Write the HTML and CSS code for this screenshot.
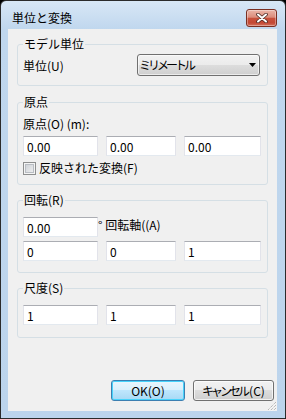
FILE: index.html
```html
<!DOCTYPE html>
<html lang="ja">
<head>
  <meta charset="UTF-8">
  <meta name="viewport" content="width=device-width, initial-scale=1.0">
  <title>単位と変換</title>
  <link rel="stylesheet" href="styles.css">
</head>
<body>
  <div class="window">
    <div class="titlebar">
      <span class="title">単位と変換</span>
      <button class="close-btn" type="button">
        <svg width="12" height="10" viewBox="0 0 12 10">
          <path d="M2 1.5 L10 8.5 M10 1.5 L2 8.5" stroke="#4a2a24" stroke-width="3.6" stroke-linecap="round"/>
          <path d="M2 1.5 L10 8.5 M10 1.5 L2 8.5" stroke="#ffffff" stroke-width="2" stroke-linecap="round"/>
        </svg>
      </button>
    </div>

    <div class="content">
      <fieldset class="group group-units">
        <legend>モデル単位</legend>
        <div class="unit-row">
          <label>単位(U)</label>
          <div class="combo">
            <span class="combo-text">ミリメートル</span>
            <svg class="combo-arrow" width="7" height="4" viewBox="0 0 7 4">
              <polygon points="0,0 7,0 3.5,4" fill="#000"/>
            </svg>
          </div>
        </div>
      </fieldset>

      <fieldset class="group group-origin">
        <legend>原点</legend>
        <div class="field-label">原点(O) (m):</div>
        <div class="xyz">
          <input type="text" value="0.00">
          <input type="text" value="0.00">
          <input type="text" value="0.00">
        </div>
        <label class="check"><span class="check-box"></span>反映された変換(F)</label>
      </fieldset>

      <fieldset class="group group-rotate">
        <legend>回転(R)</legend>
        <div class="angle-row">
          <input type="text" class="angle-input" value="0.00">
          <span class="angle-label">° 回転軸((A)</span>
        </div>
        <div class="xyz xyz-tight">
          <input type="text" value="0">
          <input type="text" value="0">
          <input type="text" value="1">
        </div>
      </fieldset>

      <fieldset class="group group-scale">
        <legend>尺度(S)</legend>
        <div class="xyz xyz-scale">
          <input type="text" value="1">
          <input type="text" value="1">
          <input type="text" value="1">
        </div>
      </fieldset>

      <div class="buttons">
        <button class="btn btn-default" type="button">OK(O)</button>
        <button class="btn btn-cancel" type="button"><span class="kana">キャンセル</span>(C)</button>
      </div>

      <svg class="gripper" width="11" height="11" viewBox="0 0 11 11">
        <path d="M10 2 L2 10 M10 5 L5 10 M10 8 L8 10" stroke="#a0a0a0" stroke-width="1" stroke-dasharray="1 1"/>
        <path d="M10.7 2.7 L2.7 10.7 M10.7 5.7 L5.7 10.7 M10.7 8.7 L8.7 10.7" stroke="#ffffff" stroke-width="1" stroke-dasharray="1 1"/>
      </svg>
    </div>
  </div>
</body>
</html>
```

FILE: styles.css
```css
body {
  margin: 0;
  background-color: #000;
  font-family: "Noto Sans CJK JP", "Liberation Sans", sans-serif;
  font-size: 12px;
  color: #000;
}
.window {
  box-sizing: border-box;
  width: 286px;
  height: 419px;
  border: 1px solid #2b2b2b;
  border-radius: 6px 6px 0 0;
  background: linear-gradient(#d8e7f6, #c0d7ee 28px, #bcd4ec);
  padding: 0 8px 7px 7px;
  display: flex;
  flex-direction: column;
}
.titlebar {
  height: 28px;
  display: flex;
  align-items: flex-start;
  justify-content: space-between;
}
.title {
  margin: 10px 0 0 4px;
  line-height: 14px;
  color: #000;
}
.close-btn {
  margin-top: 8px;
  width: 31px;
  height: 18px;
  padding: 0;
  border: 1px solid #7a2f22;
  border-radius: 3px;
  background: linear-gradient(#ebb5a8 0%, #dc8d7c 45%, #c8513c 52%, #c34834 80%, #d4735e 100%);
  box-shadow: inset 0 0 0 1px rgba(255, 255, 255, 0.35);
  display: flex;
  align-items: center;
  justify-content: center;
}
.content {
  flex: 1;
  background-color: #f0f0f0;
  display: flex;
  flex-direction: column;
  position: relative;
}
.group {
  margin: 0 9px;
  padding: 0 6px 0 5px;
  border: 1px solid #d5dfe5;
  border-radius: 3px;
  min-width: 0;
}
.group legend {
  padding: 0 1px;
  line-height: 14px;
}
.group-units {
  margin-top: 8px;
  padding-bottom: 9px;
}
.unit-row {
  display: flex;
  align-items: center;
  justify-content: space-between;
  margin-top: 3px;
  padding-right: 1px;
}
.combo {
  box-sizing: border-box;
  width: 123px;
  height: 22px;
  border: 1px solid #707070;
  border-radius: 3px;
  background: linear-gradient(#f2f2f2 0%, #ebebeb 50%, #dddddd 50%, #cfcfcf 100%);
  box-shadow: inset 0 0 0 1px rgba(255, 255, 255, 0.6);
  display: flex;
  align-items: center;
  justify-content: space-between;
  padding: 0 3px 0 1px;
}
.combo-text {
  letter-spacing: -3px;
  line-height: 14px;
}
.group-origin {
  margin-top: 9px;
  padding-bottom: 9px;
}
.field-label {
  margin-top: 8px;
  line-height: 14px;
}
.xyz {
  display: grid;
  grid-template-columns: 75px 70px 77px;
  column-gap: 8px;
  margin-top: 5px;
}
.xyz-tight {
  margin-top: 4px;
}
.xyz-scale {
  margin-top: 10px;
}
input {
  box-sizing: border-box;
  height: 20px;
  width: 100%;
  margin: 0;
  padding: 0 3px;
  border: 1px solid #e2e3ea;
  border-top-color: #abadb3;
  border-bottom-color: #e3e9ef;
  background-color: #fff;
  font-family: "Noto Sans CJK JP", "Liberation Sans", sans-serif;
  font-size: 12px;
  color: #000;
}
.check {
  display: flex;
  align-items: center;
  height: 14px;
  margin-top: 5px;
  line-height: 14px;
}
.check-box {
  box-sizing: border-box;
  width: 13px;
  height: 13px;
  margin-right: 3px;
  border: 1px solid #8e8f8f;
  background: linear-gradient(135deg, #c8ccd2, #f4f4f4);
  box-shadow: inset 0 0 0 1px #f4f4f4, inset 0 0 0 2px #b9bdc3;
}
.group-rotate {
  margin-top: 8px;
  padding-bottom: 11px;
}
.angle-row {
  display: flex;
  align-items: flex-start;
  margin-top: 10px;
}
.angle-input {
  width: 75px;
}
.angle-label {
  line-height: 14px;
  margin-top: 1px;
}
.group-scale {
  margin-top: 8px;
  padding-bottom: 12px;
}
.buttons {
  margin-top: auto;
  margin-bottom: 10px;
  padding-right: 3px;
  display: flex;
  justify-content: flex-end;
  gap: 8px;
}
.btn {
  box-sizing: border-box;
  height: 21px;
  padding: 0;
  border: 1px solid #707070;
  border-radius: 3px;
  background: linear-gradient(#f2f2f2 0%, #ebebeb 50%, #dddddd 50%, #cfcfcf 100%);
  box-shadow: inset 0 0 0 1px rgba(255, 255, 255, 0.7);
  font-family: "Noto Sans CJK JP", "Liberation Sans", sans-serif;
  font-size: 12px;
  color: #000;
}
.btn-default {
  width: 74px;
  border-color: #3c7fb1;
  background: linear-gradient(#eaf6fd 0%, #d9f0fc 50%, #bee6fd 50%, #a7d9f5 100%);
  box-shadow: inset 0 0 0 1px #48d3fb;
}
.btn-cancel {
  width: 81px;
}
.btn .kana {
  letter-spacing: -3px;
  margin-right: 2px;
}
.gripper {
  position: absolute;
  right: 0;
  bottom: 0;
}
```
